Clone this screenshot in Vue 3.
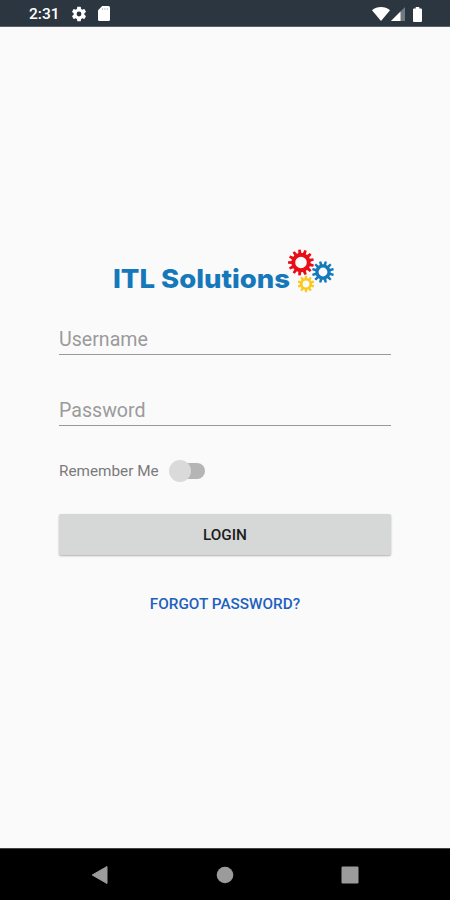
<template>
  <div class="screen">
    <header class="status-bar">
      <div class="status-left">
        <span class="clock">2:31</span>
        <svg class="status-gear" width="18" height="18" viewBox="0 0 24 24">
          <path
            fill="#fff"
            d="M19.14 12.94a7.1 7.1 0 0 0 0-1.88l2.03-1.58a.5.5 0 0 0 .12-.61l-1.92-3.32a.5.5 0 0 0-.59-.22l-2.39.96a7 7 0 0 0-1.62-.94l-.36-2.54A.5.5 0 0 0 13.92 2.4h-3.84a.5.5 0 0 0-.47.41l-.36 2.54a7 7 0 0 0-1.62.94l-2.39-.96a.5.5 0 0 0-.59.22L2.74 8.87a.5.5 0 0 0 .12.61l2.03 1.58a7.1 7.1 0 0 0 0 1.88l-2.03 1.58a.5.5 0 0 0-.12.61l1.92 3.32c.12.22.37.29.59.22l2.39-.96c.5.38 1.03.7 1.62.94l.36 2.54c.05.24.24.41.47.41h3.84c.24 0 .44-.17.47-.41l.36-2.54a7 7 0 0 0 1.62-.94l2.39.96c.22.08.47 0 .59-.22l1.92-3.32a.5.5 0 0 0-.12-.61zM12 15.2a3.2 3.2 0 1 1 0-6.4 3.2 3.2 0 0 1 0 6.4z"
          />
        </svg>
        <svg class="status-card" width="12" height="15" viewBox="0 0 12 15">
          <path fill="#fff" d="M4.2 0H10.5A1.5 1.5 0 0 1 12 1.5V13.5A1.5 1.5 0 0 1 10.5 15H1.5A1.5 1.5 0 0 1 0 13.5V4.2z" />
          <path stroke="#c3c8cc" stroke-width="1" d="M4.5 2v2M6.9 2v2M9.3 2v2" />
        </svg>
      </div>
      <div class="status-right">
        <svg width="18" height="14" viewBox="0 0 18 14">
          <path fill="#fff" d="M9 14L0 3.2C2.5 1 5.6 0 9 0s6.5 1 9 3.2z" />
        </svg>
        <svg class="signal" width="14" height="14" viewBox="0 0 14 14">
          <path fill="#717980" d="M14 0v14H0z" />
          <path fill="#fff" d="M9.5 4.5V14H0z" />
        </svg>
        <svg class="battery" width="9" height="15" viewBox="0 0 9 15">
          <path fill="#fff" d="M2.7 0h3.6v1.5H8a1 1 0 0 1 1 1V14a1 1 0 0 1-1 1H1a1 1 0 0 1-1-1V2.5a1 1 0 0 1 1-1h1.7z" />
        </svg>
      </div>
    </header>

    <main class="content">
      <svg class="logo" width="222" height="46" viewBox="0 0 222 46">
        <text class="logo-text" x="-1" y="40" textLength="177" lengthAdjust="spacingAndGlyphs">ITL Solutions</text>
        <path
          v-for="gear in gears"
          :key="gear.color"
          :d="gearPath(gear)"
          :fill="gear.color"
          fill-rule="evenodd"
        />
      </svg>

      <form class="login-form" @submit.prevent>
        <input v-model="username" class="field" type="text" placeholder="Username" />
        <input v-model="password" class="field" type="password" placeholder="Password" />
        <label class="remember">
          <span>Remember Me</span>
          <input v-model="remember" class="remember-input" type="checkbox" />
          <span :class="['switch', { on: remember }]"><span class="thumb"></span></span>
        </label>
        <button class="login-button" type="submit">LOGIN</button>
        <button class="forgot-button" type="button">FORGOT PASSWORD?</button>
      </form>
    </main>

    <nav class="nav-bar">
      <svg width="18" height="20" viewBox="0 0 18 20">
        <path fill="#9b9b9b" stroke="#9b9b9b" stroke-linejoin="round" d="M16 1.5v17L1.2 10z" />
      </svg>
      <svg width="18" height="18" viewBox="0 0 18 18">
        <circle cx="9" cy="9" r="8.3" fill="#9b9b9b" />
      </svg>
      <svg width="18" height="18" viewBox="0 0 18 18">
        <rect x="0.5" y="0.5" width="17" height="17" rx="1.2" fill="#9b9b9b" />
      </svg>
    </nav>
  </div>
</template>

<script setup>
import { ref } from 'vue'

const username = ref('')
const password = ref('')
const remember = ref(false)

const gears = [
  { color: '#e80d16', x: 187, y: 14.5, outer: 13, inner: 9.6, hole: 5.8, teeth: 13 },
  { color: '#1578ba', x: 209, y: 24, outer: 11, inner: 7.7, hole: 4.4, teeth: 12 },
  { color: '#fbc91b', x: 192, y: 36, outer: 8.4, inner: 6, hole: 3.4, teeth: 10 }
]

function gearPath({ x, y, outer, inner, hole, teeth }) {
  const step = (Math.PI * 2) / teeth
  const points = []
  for (let i = 0; i < teeth; i++) {
    // half a tooth of rotation so that a gap sits at three o'clock
    const a = (i + 0.5) * step
    const corners = [
      [inner, -0.34],
      [outer, -0.2],
      [outer, 0.2],
      [inner, 0.34]
    ]
    for (const [r, offset] of corners) {
      const angle = a + offset * step
      points.push(`${(x + r * Math.cos(angle)).toFixed(2)} ${(y + r * Math.sin(angle)).toFixed(2)}`)
    }
  }
  const ring = `M${x - hole} ${y}a${hole} ${hole} 0 1 0 ${hole * 2} 0a${hole} ${hole} 0 1 0 ${-hole * 2} 0z`
  return `M${points.join('L')}z${ring}`
}
</script>

<style>
body {
  margin: 0;
}
</style>

<style scoped>
.screen {
  display: flex;
  flex-direction: column;
  width: 100%;
  height: 100vh;
  background: #fafafa;
  font-family: Roboto, sans-serif;
  overflow: hidden;
}

.status-bar {
  display: flex;
  justify-content: space-between;
  align-items: center;
  box-sizing: border-box;
  height: 27px;
  padding: 1px 28px 0 29px;
  border-bottom: 1px solid #59616a;
  background: #2c3640;
  flex-shrink: 0;
}

.status-left,
.status-right {
  display: flex;
  align-items: center;
}

.clock {
  width: 41px;
  color: #fff;
  font-size: 15.5px;
  font-weight: 500;
  line-height: 24px;
  padding-top: 1px;
}

.status-card {
  margin-left: 10px;
}

.signal {
  margin: 1px 0 0 1px;
}

.battery {
  margin: 1px 0 0 8px;
}

.content {
  flex: 1;
  display: flex;
  flex-direction: column;
  align-items: center;
  padding: 221px 59px 0;
}

.logo {
  display: block;
  overflow: visible;
}

.logo-text {
  font-family: Inter, sans-serif;
  font-size: 26px;
  font-weight: 800;
  fill: #1578ba;
}

.login-form {
  display: flex;
  flex-direction: column;
  width: 100%;
}

.field {
  box-sizing: border-box;
  width: 100%;
  height: 31px;
  margin: 30px 0 0;
  padding: 1px 0 0;
  border: 0;
  border-bottom: 1px solid #999;
  border-radius: 0;
  outline: none;
  background: transparent;
  color: #212121;
  font-family: inherit;
  font-size: 19.6px;
}

.field + .field {
  margin-top: 40px;
}

.field::placeholder {
  color: #9b9b9b;
  opacity: 1;
}

.remember {
  display: flex;
  align-items: center;
  align-self: flex-start;
  height: 24px;
  margin-top: 33px;
  color: #7a7a7a;
  font-size: 15.3px;
}

.remember-input {
  display: none;
}

.switch {
  display: flex;
  align-items: center;
  width: 32px;
  height: 16px;
  margin-left: 14px;
  border-radius: 8px;
  background: #b5b5b5;
}

.thumb {
  width: 22px;
  height: 22px;
  margin-left: -4px;
  border-radius: 50%;
  background: #dadada;
  flex-shrink: 0;
}

.switch.on .thumb {
  margin-left: 14px;
}

.login-button {
  height: 41px;
  margin-top: 31px;
  padding: 0;
  border: 0;
  border-radius: 2px;
  background: #d6d7d7;
  box-shadow: 0 1px 2px rgba(0, 0, 0, 0.3);
  color: #1c1c1c;
  font-family: inherit;
  font-size: 15.3px;
  font-weight: 500;
}

.forgot-button {
  align-self: center;
  height: 40px;
  margin-top: 29px;
  padding: 0;
  border: 0;
  background: transparent;
  color: #1f61bd;
  font-family: inherit;
  font-size: 15.3px;
  font-weight: 500;
}

.nav-bar {
  display: flex;
  justify-content: space-between;
  align-items: center;
  box-sizing: border-box;
  height: 52px;
  padding: 0 91px;
  border-top: 1px solid #444;
  background: #000;
  flex-shrink: 0;
}
</style>
